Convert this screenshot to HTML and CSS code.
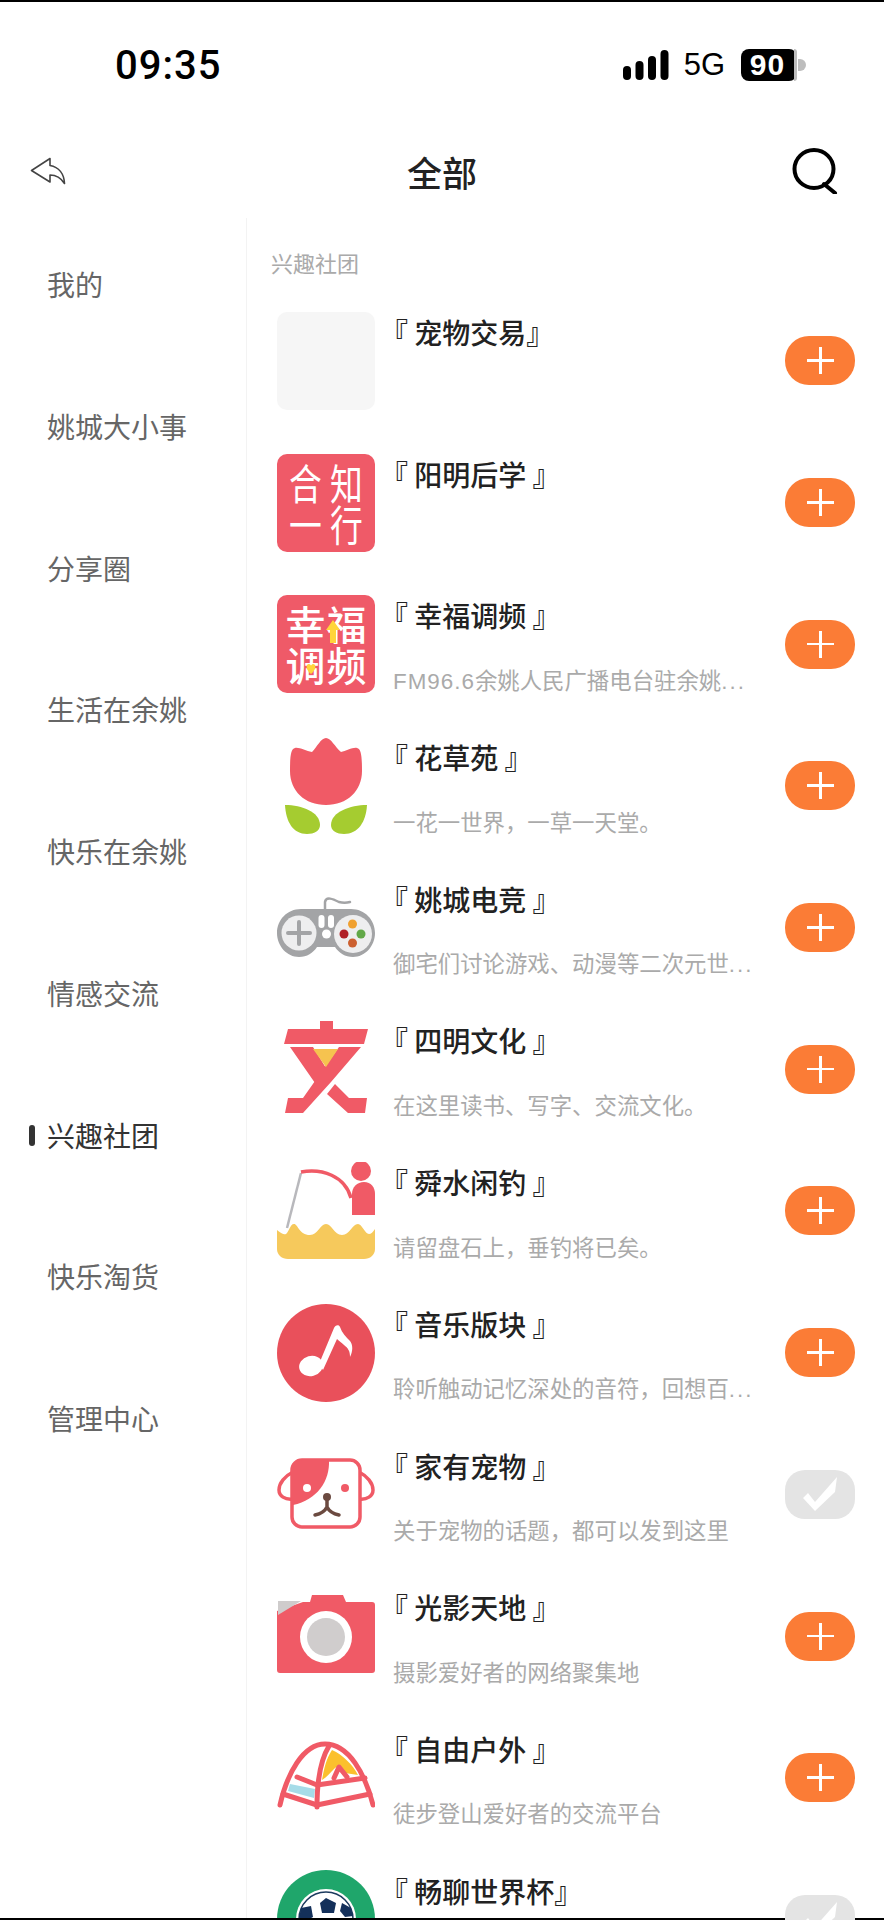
FILE: index.html
```html
<!DOCTYPE html>
<html lang="zh-CN">
<head>
    <meta charset="UTF-8">
    <meta name="viewport" content="width=device-width, initial-scale=1.0">
    <title>全部</title>
    <link rel="stylesheet" href="styles.css">
</head>
<body>
    <div class="page">
        <div class="status-bar">
            <span class="clock">09:35</span>
            <div class="status-right">
                <svg class="signal" width="46" height="30" viewBox="0 0 46 30">
                    <rect x="0" y="16" width="8" height="14" rx="4"/>
                    <rect x="12.5" y="11" width="8" height="19" rx="4"/>
                    <rect x="25" y="6" width="8" height="24" rx="4"/>
                    <rect x="37.5" y="0" width="8" height="30" rx="4"/>
                </svg>
                <span class="network">5G</span>
                <div class="battery"><span class="battery-level">90</span></div>
            </div>
        </div>

        <div class="nav-bar">
            <svg class="back-icon" width="36" height="28" viewBox="0 0 36 28">
                <path d="M20 1.5 L1.5 13.5 L20 25 L20 18 C26 18 31 21 34.5 26.5 C34 17 29 10 20 8.5 Z"/>
            </svg>
            <span class="nav-title">全部</span>
            <svg class="search-icon" width="46" height="46" viewBox="0 0 46 46">
                <ellipse cx="22" cy="21" rx="19.5" ry="19"/>
                <path d="M32 36 L43 45"/>
            </svg>
        </div>

        <div class="main">
            <ul class="side-menu">
                <li>我的</li>
                <li>姚城大小事</li>
                <li>分享圈</li>
                <li>生活在余姚</li>
                <li>快乐在余姚</li>
                <li>情感交流</li>
                <li class="active">兴趣社团</li>
                <li>快乐淘货</li>
                <li>管理中心</li>
            </ul>

            <div class="content">
                <h2 class="section-title">兴趣社团</h2>

                <div class="club">
                    <div class="tile tile-blank"></div>
                    <div class="club-text">
                        <div class="club-name">『 宠物交易』</div>
                    </div>
                    <button class="join"></button>
                </div>

                <div class="club">
                    <div class="tile tile-red seal">
                        <span>合</span><span>知</span><span>一</span><span>行</span>
                    </div>
                    <div class="club-text">
                        <div class="club-name">『 阳明后学 』</div>
                    </div>
                    <button class="join"></button>
                </div>

                <div class="club">
                    <div class="tile tile-red radio">
                        <span>幸</span><span>福</span><span>调</span><span>频</span>
                        <svg class="radio-marks" width="98" height="98" viewBox="0 0 98 98">
                            <path d="M56 25 L63 35 L59 35 L59 48 L53 48 L53 35 L49 35 Z"/>
                            <path d="M34 79 C28 74 29 69 32 69 C33 69 34 70 34 71 C34 70 35 69 36 69 C39 69 40 74 34 79 Z"/>
                        </svg>
                    </div>
                    <div class="club-text">
                        <div class="club-name">『 幸福调频 』</div>
                        <div class="club-desc"><span class="latin">FM96.6</span>余姚人民广播电台驻余姚<span class="more">...</span></div>
                    </div>
                    <button class="join"></button>
                </div>

                <div class="club">
                    <svg class="tile" viewBox="0 0 98 98">
                        <path fill="#f05a66" d="M49 1 C44 1 40 10 35 15 C29 14 22 10 18 11 C14 12 13 18 13 34 C13 54 28 68 49 68 C70 68 85 54 85 34 C85 18 84 12 80 11 C76 10 69 14 64 15 C58 10 54 1 49 1 Z"/>
                        <path fill="#a5cc30" d="M8 68 C25 68 43 75 43 88 C43 94 37 97 30 97 C16 97 9 85 8 68 Z"/>
                        <path fill="#a5cc30" d="M90 68 C73 68 54 75 54 88 C54 94 60 97 67 97 C81 97 89 85 90 68 Z"/>
                    </svg>
                    <div class="club-text">
                        <div class="club-name">『 花草苑 』</div>
                        <div class="club-desc">一花一世界，一草一天堂。</div>
                    </div>
                    <button class="join"></button>
                </div>

                <div class="club">
                    <svg class="tile" viewBox="0 0 98 98">
                        <path fill="none" stroke="#a3a4a6" stroke-width="2.5" stroke-linecap="round" d="M48 32 L48 23 C49 17 56 20 62 23 C66 24 69 24 73 23"/>
                        <path fill="#a3a4a6" d="M24 30 L74 30 C88 30 98 41 98 54 C98 67 88 78 76 78 C68 78 62 74 58 68 L40 68 C36 74 30 78 22 78 C10 78 0 67 0 54 C0 41 10 30 24 30 Z"/>
                        <circle cx="22" cy="54" r="17.5" fill="#eeeeef"/>
                        <circle cx="76" cy="55" r="19" fill="#eeeeef"/>
                        <path stroke="#a3a4a6" stroke-width="4" stroke-linecap="round" d="M11 54 L33 54 M22 43 L22 65"/>
                        <rect x="41.5" y="36" width="6" height="13" rx="3" fill="#fff"/>
                        <rect x="51" y="36" width="6" height="13" rx="3" fill="#fff"/>
                        <circle cx="49.5" cy="55" r="4.5" fill="#fff"/>
                        <circle cx="75.5" cy="45" r="4.5" fill="#f0a030"/>
                        <circle cx="67" cy="55" r="4.5" fill="#b02028"/>
                        <circle cx="84" cy="55" r="4.5" fill="#62a848"/>
                        <circle cx="75.5" cy="64" r="4.5" fill="#cc6030"/>
                    </svg>
                    <div class="club-text">
                        <div class="club-name">『 姚城电竞 』</div>
                        <div class="club-desc">御宅们讨论游戏、动漫等二次元世<span class="more">...</span></div>
                    </div>
                    <button class="join"></button>
                </div>

                <div class="club">
                    <svg class="tile" viewBox="0 0 98 98">
                        <g fill="#f05a66">
                            <path d="M43 1 L56 1 L56 9 L91 9 L87 24 L7 24 L11 9 L43 9 Z"/>
                            <path d="M13 27 L36 27 L49 48 L56 41 L60 51 L50 63 L38 63 Z"/>
                            <path d="M62 27 L84 27 L54 62 L26 93 L8 93 L11 78 L26 78 Z"/>
                            <path d="M58 64 L72 78 L90 78 L88 93 L71 93 L50 74 Z"/>
                        </g>
                        <path fill="#f6c34f" d="M36 29 L61 29 L49 47 Z"/>
                    </svg>
                    <div class="club-text">
                        <div class="club-name">『 四明文化 』</div>
                        <div class="club-desc">在这里读书、写字、交流文化。</div>
                    </div>
                    <button class="join"></button>
                </div>

                <div class="club">
                    <svg class="tile" viewBox="0 0 98 98">
                        <path fill="none" stroke="#b8b8bc" stroke-width="2.5" d="M24 11 L10 66"/>
                        <path fill="none" stroke="#f05a66" stroke-width="3.5" d="M24 10 C45 6 68 14 74 36"/>
                        <circle cx="84" cy="9" r="10" fill="#f05a66"/>
                        <path fill="#f05a66" d="M75 53 L75 32 C75 25 80 20 87 20 C94 20 98 25 98 32 L98 53 Z"/>
                        <path fill="#f6c95c" d="M0 68 C5 72 7 73 9 72 C12 70 13 62 17 62 C21 62 22 73 33 73 C41 73 43 62 49 62 C55 62 57 73 65 73 C73 73 75 62 81 62 C85 62 88 72 92 72 C94 72 96 70 98 67 L98 87 C98 93 93 97 87 97 L11 97 C5 97 0 93 0 87 Z"/>
                    </svg>
                    <div class="club-text">
                        <div class="club-name">『 舜水闲钓 』</div>
                        <div class="club-desc">请留盘石上，垂钓将已矣。</div>
                    </div>
                    <button class="join"></button>
                </div>

                <div class="club">
                    <svg class="tile" viewBox="0 0 98 98">
                        <circle cx="49" cy="49" r="49" fill="#e9505b"/>
                        <g fill="#fff">
                            <ellipse cx="34" cy="62" rx="12" ry="10" transform="rotate(-15 34 62)"/>
                            <path d="M42 60 L57 24 C58 21 62 20 63 23 C65 29 69 33 73 37 C76 41 76 47 73 53 C73 47 71 44 67 41 C65 39 62 37 60 35 L46 66 Z"/>
                        </g>
                    </svg>
                    <div class="club-text">
                        <div class="club-name">『 音乐版块 』</div>
                        <div class="club-desc">聆听触动记忆深处的音符，回想百<span class="more">...</span></div>
                    </div>
                    <button class="join"></button>
                </div>

                <div class="club">
                    <svg class="tile" viewBox="0 0 98 98">
                        <g fill="#fff" stroke="#f05a66" stroke-width="3.5">
                            <path d="M16 27 C8 31 2 38 2 45 C2 51 8 55 16 54"/>
                            <path d="M82 27 C90 31 96 38 96 45 C96 51 90 55 82 54"/>
                            <rect x="15" y="15" width="68" height="67" rx="10"/>
                        </g>
                        <path fill="#f05a66" d="M25 15 L52 15 C53 36 40 55 16 60 L16 24 C16 19 20 15 25 15 Z"/>
                        <circle cx="30" cy="43" r="4" fill="#fff"/>
                        <circle cx="68" cy="43" r="4" fill="#f05a66"/>
                        <path fill="none" stroke="#6b4a40" stroke-width="3.5" stroke-linecap="round" stroke-linejoin="round" d="M50 53 L50 62 C48 66 43 69 38 70 M50 62 C52 66 57 69 62 70"/>
                        <circle cx="50" cy="52" r="4" fill="#6b4a40"/>
                    </svg>
                    <div class="club-text">
                        <div class="club-name">『 家有宠物 』</div>
                        <div class="club-desc">关于宠物的话题，都可以发到这里</div>
                    </div>
                    <button class="join joined">
                        <svg width="70" height="49" viewBox="0 0 70 49"><path fill="#fff" d="M18 28 L23 23 L30 32 L52 7 L50 22 L30 41 Z"/></svg>
                    </button>
                </div>

                <div class="club">
                    <svg class="tile" viewBox="0 0 98 98">
                        <path fill="#f05a66" d="M0 24 L26 15 L33 15 L35 8 L66 8 L69 15 L95 15 C97 15 98 16 98 18 L98 83 C98 85 97 86 95 86 L3 86 C1 86 0 85 0 83 Z"/>
                        <path fill="#cfcccc" d="M1 14 L24 14 L1 28 Z"/>
                        <circle cx="49" cy="50" r="26" fill="#fff"/>
                        <circle cx="49" cy="50" r="19" fill="#d0cdcd"/>
                    </svg>
                    <div class="club-text">
                        <div class="club-name">『 光影天地 』</div>
                        <div class="club-desc">摄影爱好者的网络聚集地</div>
                    </div>
                    <button class="join"></button>
                </div>

                <div class="club">
                    <svg class="tile" viewBox="0 0 98 98">
                        <path fill="#fbc02d" d="M55 21 C66 26 76 36 81 46 L68 44 C65 38 60 36 57 40 C54 43 50 48 45 51 C47 40 49 30 55 21 Z"/>
                        <path fill="#a6dce8" d="M13 55 L38 60 L37 69 L11 62 Z"/>
                        <g fill="none" stroke="#f05a66" stroke-width="5" stroke-linecap="round" stroke-linejoin="round">
                            <path d="M3 76 C10 45 26 15 48 15 C72 15 88 45 96 76"/>
                            <path d="M52 17 C44 30 40 50 40 78"/>
                            <path d="M6 65 L40 76 L93 65"/>
                            <path d="M20 48 L40 56 L88 49"/>
                            <path d="M57 49 L62 38 L70 48"/>
                        </g>
                    </svg>
                    <div class="club-text">
                        <div class="club-name">『 自由户外 』</div>
                        <div class="club-desc">徒步登山爱好者的交流平台</div>
                    </div>
                    <button class="join"></button>
                </div>

                <div class="club">
                    <svg class="tile" viewBox="0 0 98 98">
                        <circle cx="49" cy="49" r="49" fill="#1fa66b"/>
                        <circle cx="49" cy="49" r="30" fill="#fff"/>
                        <circle cx="49" cy="49" r="27" fill="#fff" stroke="#1c3a5e" stroke-width="1.5"/>
                        <path fill="#14305a" d="M49 28 L59 33 L57 43 L45 43 L43 33 Z"/>
                        <path fill="#14305a" d="M24 38 L34 36 L36 47 L27 52 L22 48 Z"/>
                        <path fill="#14305a" d="M65 33 L74 38 L76 46 L68 47 L63 41 Z"/>
                    </svg>
                    <div class="club-text">
                        <div class="club-name">『 畅聊世界杯』</div>
                    </div>
                    <button class="join joined">
                        <svg width="70" height="49" viewBox="0 0 70 49"><path fill="#fff" d="M18 28 L23 23 L30 32 L52 7 L50 22 L30 41 Z"/></svg>
                    </button>
                </div>
            </div>
        </div>

        <div class="edge-bottom"></div>
    </div>
</body>
</html>
```

FILE: styles.css
```css
* {
    box-sizing: border-box;
}
body {
    margin: 0;
    background-color: #fff;
    color: #222;
    font-family: "Noto Sans CJK SC", "Liberation Sans", sans-serif;
}
.page {
    display: flex;
    flex-direction: column;
    height: 1920px;
    border-top: 2px solid #000;
    overflow: hidden;
}

/* status bar */
.status-bar {
    flex: none;
    display: flex;
    align-items: center;
    justify-content: space-between;
    height: 126px;
    padding: 0 78px 0 115px;
    color: #000;
}
.clock {
    font-family: Roboto, sans-serif;
    font-size: 40px;
    font-weight: 500;
    letter-spacing: 1px;
}
.status-right {
    display: flex;
    align-items: center;
}
.signal {
    fill: #000;
}
.network {
    margin-left: 15px;
    font-family: "Liberation Sans", sans-serif;
    font-size: 31px;
}
.battery {
    position: relative;
    width: 56px;
    height: 32px;
    margin-left: 16px;
    margin-right: 9px;
    border-radius: 8px;
    background-color: #000;
    text-align: center;
    line-height: 32px;
}
.battery::before {
    content: "";
    position: absolute;
    left: 53px;
    top: 0;
    width: 3px;
    height: 32px;
    border-radius: 0 6px 6px 0;
    background-color: #bdbdbd;
}
.battery::after {
    content: "";
    position: absolute;
    left: 57px;
    top: 10px;
    width: 8px;
    height: 12px;
    border-radius: 0 6px 6px 0;
    background-color: #bdbdbd;
}
.battery-level {
    display: block;
    width: 53px;
    color: #fff;
    font-family: "Liberation Sans", sans-serif;
    font-size: 30px;
    font-weight: bold;
    letter-spacing: 1px;
}

/* title row */
.nav-bar {
    flex: none;
    display: grid;
    grid-template-columns: 1fr auto 1fr;
    align-items: center;
    height: 90px;
    padding: 0 46px 4px;
}
.nav-title {
    font-size: 35px;
    font-weight: 500;
    color: #222;
}
.back-icon {
    margin-left: -16px;
    fill: none;
    stroke: #444;
    stroke-width: 1.6;
    stroke-linejoin: round;
}
.search-icon {
    justify-self: end;
    fill: none;
    stroke: #000;
    stroke-width: 4;
    stroke-linecap: round;
}

.main {
    flex: 1;
    display: flex;
    min-height: 0;
}

/* left menu */
.side-menu {
    flex: none;
    display: flex;
    flex-direction: column;
    gap: 101.75px;
    width: 247px;
    margin: 0;
    padding: 46px 0 0;
    border-right: 1px solid #f3f3f3;
    list-style: none;
}
.side-menu li {
    position: relative;
    height: 40px;
    padding-left: 47px;
    color: #666;
    font-size: 28px;
    line-height: 40px;
}
.side-menu li.active {
    color: #333;
}
.side-menu li.active::before {
    content: "";
    position: absolute;
    left: 29px;
    top: 10px;
    width: 6px;
    height: 21px;
    border-radius: 3px;
    background-color: #333;
}

/* club list */
.content {
    flex: 1;
    min-width: 0;
    padding: 0 29px 0 24px;
}
.section-title {
    height: 94px;
    margin: 0;
    color: #aaa;
    font-size: 22px;
    font-weight: normal;
    line-height: 88px;
}
.club {
    display: flex;
    align-items: center;
    height: 141.7px;
    padding: 0 0 44px 6px;
}
.tile {
    flex: none;
    width: 98px;
    height: 98px;
}
.tile-blank {
    border-radius: 10px;
    background-color: #f6f6f6;
}
.tile-red {
    position: relative;
    display: grid;
    grid-template-columns: 1fr 1fr;
    padding: 8px;
    border-radius: 10px;
    background-color: #ef5a68;
    color: #fff;
    text-align: center;
}
.seal {
    font-size: 40px;
    line-height: 41px;
}
.seal span {
    transform: scale(0.82, 1.05);
}
.radio {
    font-size: 40px;
    font-weight: 500;
    line-height: 41px;
}
.radio-marks {
    position: absolute;
    left: 0;
    top: 0;
    fill: #ffd53a;
}
.club-text {
    flex: 1;
    align-self: stretch;
    min-width: 0;
    padding-left: 5px;
}
.club-name {
    height: 40px;
    color: #222;
    font-size: 28px;
    font-weight: 500;
    line-height: 40px;
}
.club-desc {
    margin-top: 31.5px;
    padding-left: 13px;
    color: #aaa;
    font-family: "Liberation Sans", "Noto Sans CJK SC", sans-serif;
    font-size: 22.4px;
    line-height: 30px;
    white-space: nowrap;
}
.latin {
    letter-spacing: 1px;
}
.more {
    letter-spacing: 2px;
}
.join {
    position: relative;
    flex: none;
    width: 70px;
    height: 49px;
    padding: 0;
    border: none;
    border-radius: 24px;
    background-color: #fb7c36;
}
.join::before,
.join::after {
    content: "";
    position: absolute;
    background-color: #fff;
}
.join::before {
    left: 22px;
    top: 23px;
    width: 27px;
    height: 2.5px;
}
.join::after {
    left: 34px;
    top: 11px;
    width: 2.5px;
    height: 27px;
}
.joined {
    background-color: #e4e4e4;
    border-radius: 20px;
}
.joined::before,
.joined::after {
    display: none;
}
.joined svg {
    display: block;
}

.edge-bottom {
    flex: none;
    height: 2px;
    background-color: #000;
}
```
